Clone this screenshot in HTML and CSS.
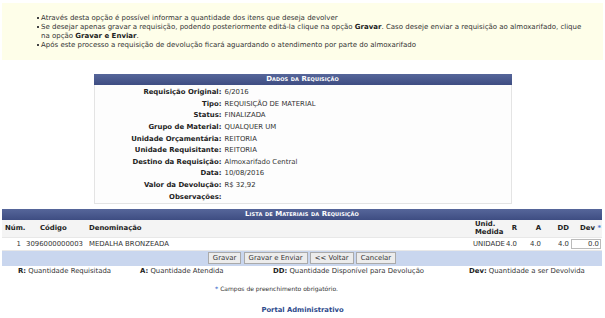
FILE: index.html
```
<!DOCTYPE html>
<html lang="pt-br">
<head>
    <meta charset="utf-8">
    <title>Devolução de Requisição</title>
    <link rel="stylesheet" href="styles.css">
</head>
<body>
    <div class="notice">
        <ul>
            <li>Através desta opção é possível informar a quantidade dos itens que deseja devolver</li>
            <li>Se desejar apenas gravar a requisição, podendo posteriormente editá-la clique na opção <b>Gravar</b>. Caso deseje enviar a requisição ao almoxarifado, clique na opção <b>Gravar e Enviar</b>.</li>
            <li>Após este processo a requisição de devolução ficará aguardando o atendimento por parte do almoxarifado</li>
        </ul>
    </div>

    <table class="form dados">
        <caption>Dados da Requisição</caption>
        <tbody>
            <tr><th>Requisição Original:</th><td>6/2016</td></tr>
            <tr><th>Tipo:</th><td>REQUISIÇÃO DE MATERIAL</td></tr>
            <tr><th>Status:</th><td>FINALIZADA</td></tr>
            <tr><th>Grupo de Material:</th><td>QUALQUER UM</td></tr>
            <tr><th>Unidade Orçamentária:</th><td>REITORIA</td></tr>
            <tr><th>Unidade Requisitante:</th><td>REITORIA</td></tr>
            <tr><th>Destino da Requisição:</th><td>Almoxarifado Central</td></tr>
            <tr><th>Data:</th><td>10/08/2016</td></tr>
            <tr><th>Valor da Devolução:</th><td>R$ 32,92</td></tr>
            <tr><th>Observações:</th><td></td></tr>
        </tbody>
    </table>

    <table class="form lista">
        <caption>Lista de Materiais da Requisição</caption>
        <colgroup>
            <col class="c-num">
            <col class="c-cod">
            <col class="c-den">
            <col class="c-uni">
            <col class="c-r">
            <col class="c-a">
            <col class="c-dd">
            <col class="c-dev">
        </colgroup>
        <thead>
            <tr>
                <th class="num">Núm.</th>
                <th class="cod">Código</th>
                <th class="den">Denominação</th>
                <th class="uni">Unid.<br>Medida</th>
                <th class="qtd">R</th>
                <th class="qtd">A</th>
                <th class="qtd">DD</th>
                <th class="dev">Dev <span class="req">*</span></th>
            </tr>
        </thead>
        <tbody>
            <tr>
                <td class="num">1</td>
                <td class="cod">3096000000003</td>
                <td class="den">MEDALHA BRONZEADA</td>
                <td class="uni">UNIDADE</td>
                <td class="qtd">4.0</td>
                <td class="qtd">4.0</td>
                <td class="qtd">4.0</td>
                <td class="dev"><input class="qtd-input" value="0.0"></td>
            </tr>
        </tbody>
        <tfoot>
            <tr>
                <td colspan="8">
                    <button>Gravar</button>
                    <button>Gravar e Enviar</button>
                    <button>&lt;&lt; Voltar</button>
                    <button>Cancelar</button>
                </td>
            </tr>
        </tfoot>
    </table>

    <div class="legend">
        <span><b>R:</b> Quantidade Requisitada</span>
        <span><b>A:</b> Quantidade Atendida</span>
        <span><b>DD:</b> Quantidade Disponível para Devolução</span>
        <span><b>Dev:</b> Quantidade a ser Devolvida</span>
    </div>

    <p class="obrig"><span class="req">*</span> Campos de preenchimento obrigatório.</p>

    <p class="portal">Portal Administrativo</p>
</body>
</html>
```

FILE: styles.css
```
body {
    margin: 0;
    font-family: "DejaVu Sans", Verdana, sans-serif;
    font-size: 6.9px;
    color: #333;
}

b {
    color: #222;
}

.notice {
    margin: 3px 2px 0;
    height: 57px;
    background: #fefee9;
    box-sizing: border-box;
    padding-top: 11px;
    font-size: 7px;
}

.notice ul {
    margin: 0;
    padding-left: 39px;
    padding-right: 12px;
    list-style: none;
}

.notice li {
    position: relative;
    line-height: 9px;
}

.notice li:before {
    content: "";
    position: absolute;
    left: -4px;
    top: 3px;
    width: 2px;
    height: 2px;
    background: #444;
}

table.form {
    border-collapse: collapse;
}

table.form caption {
    background: linear-gradient(#56669a, #3e4d82);
    color: #fff;
    font-weight: bold;
    font-variant: small-caps;
    font-size: 7px;
    height: 11px;
    line-height: 11px;
    letter-spacing: 0.1px;
}

.dados {
    width: 418px;
    margin: 14px auto 0;
    border: 1px solid #e4e4e4;
    border-top: 0;
}

.dados tbody {
    background: #fdfdfd;
}

.dados th {
    width: 127px;
    text-align: right;
    font-weight: bold;
    color: #222;
    padding: 0 1px 0 0;
    height: 11.6px;
    line-height: 9px;
}

.dados td {
    padding: 0 0 0 2px;
    line-height: 9px;
}

.dados tr:first-child th,
.dados tr:first-child td {
    padding-top: 2px;
}

.lista {
    width: 600px;
    margin: 5px 2px 0;
    table-layout: fixed;
}

.lista caption {
    height: 10px;
    line-height: 10px;
}

.c-num { width: 22px; }
.c-cod { width: 63px; }
.c-den { width: 384px; }
.c-uni { width: 35px; }
.c-r { width: 12px; }
.c-a { width: 24px; }
.c-dd { width: 28px; }
.c-dev { width: 32px; }

.lista th,
.lista td {
    overflow: visible;
    white-space: nowrap;
}

.lista thead th {
    background: #f4f4f4;
    font-weight: bold;
    color: #222;
    text-align: left;
    height: 17px;
    line-height: 8px;
    padding: 0 0 0 2px;
    vertical-align: middle;
}

.lista tbody td {
    background: #fff;
    height: 12px;
    padding: 0 0 0 2px;
    border-top: 1px solid #e8e8e8;
    border-bottom: 1px solid #e8e8e8;
}

.lista thead .uni {
    padding-left: 4px;
}

.lista td.num {
    text-align: right;
    padding: 0 3px 0 0;
}

.lista thead .num {
    padding-left: 3px;
}

.lista thead .cod {
    padding-left: 16px;
}

.lista .qtd,
.lista thead .qtd {
    text-align: right;
    padding: 0 1px 0 0;
}

.lista .dev,
.lista thead .dev {
    text-align: right;
    padding: 0 1px 0 0;
}

.qtd-input {
    width: 30px;
    height: 10px;
    box-sizing: border-box;
    border: 1px solid #bbb;
    font: inherit;
    color: #333;
    text-align: right;
    padding: 0 1px;
    margin: 0;
    vertical-align: middle;
}

.req {
    color: #4b7ad0;
    font-weight: bold;
}

.lista tfoot td {
    background: #c9d6ee;
    text-align: center;
    height: 15px;
    padding: 0;
}

.lista tfoot button {
    font: inherit;
    color: #333;
    background: #ececec;
    border: 1px solid #aaa;
    height: 12px;
    padding: 0 4px;
    margin: 0;
}

.legend {
    display: flex;
    padding: 1px 0 0 18px;
    line-height: 8px;
}

.legend span:nth-child(1) {
    width: 122px;
}

.legend span:nth-child(2) {
    width: 133px;
}

.legend span:nth-child(3) {
    width: 196px;
}

.obrig {
    margin: 10px 0 0;
    text-align: center;
    font-size: 6px;
    line-height: 8px;
    padding-right: 52px;
}

.portal {
    margin: 13px 0 0;
    text-align: center;
    font-weight: bold;
    color: #2d4a8c;
    font-size: 6.8px;
    line-height: 9px;
}
```
